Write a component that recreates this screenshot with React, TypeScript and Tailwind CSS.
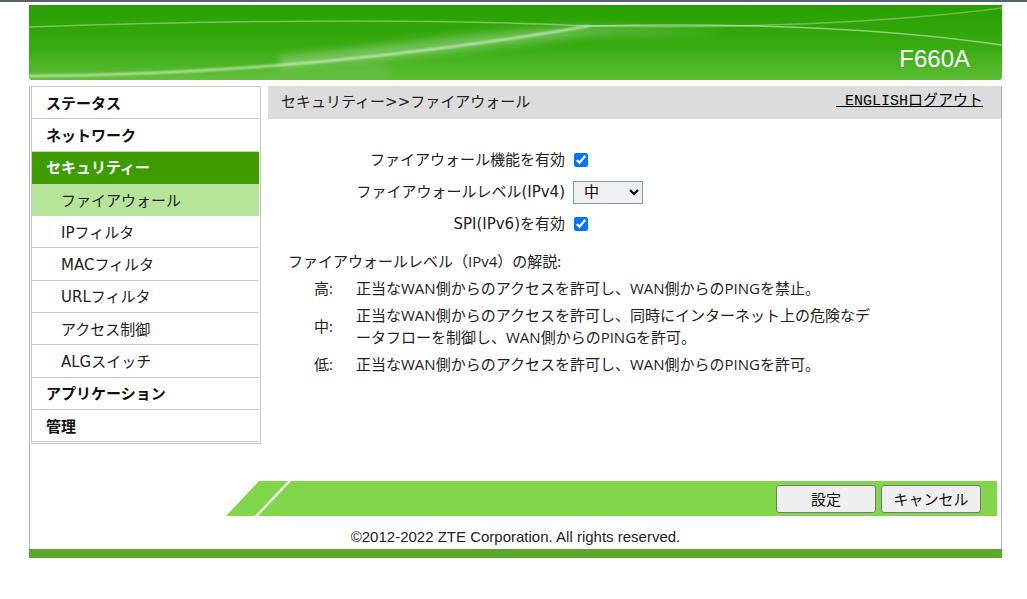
import React from "react";

const menu: { label: string; level: number; active?: boolean }[] = [
  { label: "ステータス", level: 0 },
  { label: "ネットワーク", level: 0 },
  { label: "セキュリティー", level: 0, active: true },
  { label: "ファイアウォール", level: 1, active: true },
  { label: "IPフィルタ", level: 1 },
  { label: "MACフィルタ", level: 1 },
  { label: "URLフィルタ", level: 1 },
  { label: "アクセス制御", level: 1 },
  { label: "ALGスイッチ", level: 1 },
  { label: "アプリケーション", level: 0 },
  { label: "管理", level: 0 },
];

const desc = [
  { k: "高", v: "正当なWAN側からのアクセスを許可し、WAN側からのPINGを禁止。" },
  {
    k: "中",
    v: "正当なWAN側からのアクセスを許可し、同時にインターネット上の危険なデータフローを制御し、WAN側からのPINGを許可。",
  },
  { k: "低", v: "正当なWAN側からのアクセスを許可し、WAN側からのPINGを許可。" },
];

function Header() {
  return (
    <div className="relative h-[75px] overflow-hidden rounded-b-[3px]">
      <svg
        className="absolute inset-0"
        width="973"
        height="75"
        viewBox="0 0 973 75"
      >
        <defs>
          <linearGradient id="hg" x1="0" y1="0" x2="0" y2="1">
            <stop offset="0" stopColor="#28a000" />
            <stop offset="0.55" stopColor="#37aa10" />
            <stop offset="1" stopColor="#5dbe35" />
          </linearGradient>
          <filter id="bl" x="-10%" y="-50%" width="120%" height="200%">
            <feGaussianBlur stdDeviation="5" />
          </filter>
          <filter id="bl2" x="-10%" y="-50%" width="120%" height="200%">
            <feGaussianBlur stdDeviation="0.8" />
          </filter>
        </defs>
        <rect width="973" height="75" fill="url(#hg)" />
        <path
          d="M250,52 C400,36 500,20 570,22 C620,24 660,26 700,27 C640,30 600,28 560,30 C480,40 380,54 250,62 Z"
          fill="#ffffff"
          opacity="0.3"
          filter="url(#bl)"
        />
        <path
          d="M0,70 C150,70 260,66 360,56 L360,75 L0,75 Z"
          fill="#ffffff"
          opacity="0.08"
          filter="url(#bl)"
        />
        <path
          d="M0,22 C180,16 380,12 560,21"
          stroke="#ffffff"
          strokeOpacity="0.35"
          strokeWidth="1.5"
          fill="none"
        />
        <path
          d="M0,71 C200,70 380,52 560,21"
          stroke="#ffffff"
          strokeOpacity="0.7"
          strokeWidth="2"
          fill="none"
          filter="url(#bl2)"
        />
        <path
          d="M560,21 C700,18 850,22 973,40"
          stroke="#ffffff"
          strokeOpacity="0.45"
          strokeWidth="1.5"
          fill="none"
        />
        <path
          d="M560,21 C700,24 860,18 973,3"
          stroke="#ffffff"
          strokeOpacity="0.3"
          strokeWidth="1.5"
          fill="none"
        />
      </svg>
      <div className="relative flex justify-end pr-[32px] pt-[42px] text-[24px] leading-[24px] text-white font-['Liberation_Sans',Arial,sans-serif]">
        F660A
      </div>
    </div>
  );
}

function Sidebar() {
  return (
    <div className="ml-[1px] box-border w-[230px] self-start border border-[#c8c8c8] pr-[1px] pb-[1px] font-['DejaVu_Sans','Noto_Sans_CJK_JP',sans-serif] text-[15px]">
      {menu.map((m) => {
        let cls = "";
        if (m.level === 0 && m.active) {
          cls = "pl-[14px] font-bold text-white bg-[#3e9c00] border-[#3e9c00]";
        } else if (m.level === 0) {
          cls = "pl-[14px] font-bold text-[#111111] border-[#cccccc]";
        } else if (m.active) {
          cls = "pl-[29px] text-[#222222] bg-[#b6e59a] border-[#b6e59a]";
        } else {
          cls = "pl-[29px] text-[#222222] border-[#cccccc]";
        }
        return (
          <div
            key={m.label}
            className={
              "box-border flex h-[32.3px] items-center border-b pt-[3px] leading-none " +
              cls
            }
          >
            {m.label}
          </div>
        );
      })}
    </div>
  );
}

function Content() {
  return (
    <div className="ml-[7px] flex-1 text-[#222222]">
      <div className="flex h-[33px] items-center justify-between bg-[#dcdcdc] pl-[13px] pr-[18px] font-['DejaVu_Sans','Noto_Sans_CJK_JP',sans-serif] text-[15px]">
        <span>セキュリティー&gt;&gt;ファイアウォール</span>
        <span className="flex font-['Liberation_Mono','Noto_Sans_CJK_JP',monospace] text-[15px] text-black">
          <a className="underline whitespace-pre" href="#">
            {" ENGLISH"}
          </a>
          <a className="underline" href="#">
            ログアウト
          </a>
        </span>
      </div>

      <div className="mt-[25px] font-['DejaVu_Sans','Noto_Sans_CJK_JP',sans-serif] text-[15px]">
        <div className="flex h-[32px] items-center">
          <div className="w-[297px] text-right">ファイアウォール機能を有効</div>
          <div className="flex pl-[9px]">
            <input type="checkbox" defaultChecked className="m-0 h-[14px] w-[14px]" />
          </div>
        </div>
        <div className="flex h-[32px] items-center">
          <div className="w-[297px] text-right">ファイアウォールレベル(IPv4)</div>
          <div className="flex pl-[8px]">
            <select
              defaultValue="中"
              className="h-[23px] w-[70px] border border-[#7f9db9] bg-[#f0f0f0] pl-[6px] text-[15px] text-black"
            >
              <option>高</option>
              <option>中</option>
              <option>低</option>
            </select>
          </div>
        </div>
        <div className="flex h-[32px] items-center">
          <div className="w-[297px] text-right">SPI(IPv6)を有効</div>
          <div className="flex pl-[9px]">
            <input type="checkbox" defaultChecked className="m-0 h-[14px] w-[14px]" />
          </div>
        </div>
      </div>

      <div className="mt-[10px] pl-[20px] font-['Open_Sans','Noto_Sans_CJK_JP',sans-serif] text-[15px] leading-[22px]">
        <div>ファイアウォールレベル（IPv4）の解説:</div>
        <div className="mt-[5px] flex flex-col gap-[5px] pl-[26px]">
          {desc.map((d) => (
            <div key={d.k} className="flex items-center">
              <div className="w-[42px] shrink-0">{d.k}:</div>
              <div className="w-[520px]">{d.v}</div>
            </div>
          ))}
        </div>
      </div>
    </div>
  );
}

function BottomBar() {
  return (
    <div className="ml-[196px] mr-[4px] mt-[37px] flex h-[35px]">
      <svg width="70" height="35" viewBox="0 0 70 35" className="shrink-0">
        <polygon points="0,35 33,0 62,0 29,35" fill="#82d64c" />
        <polygon points="32,35 65,0 70,0 70,35" fill="#82d64c" />
      </svg>
      <div className="flex flex-1 items-center justify-end gap-[5px] bg-[#82d64c] pr-[16px] font-['Noto_Sans_CJK_JP',sans-serif] text-[15px] text-[#111111]">
        <button className="box-border h-[28px] w-[100px] rounded-[3px] border border-[#767676] bg-[#efefef] leading-none">
          設定
        </button>
        <button className="box-border h-[28px] w-[100px] rounded-[3px] border border-[#767676] bg-[#efefef] leading-none">
          キャンセル
        </button>
      </div>
    </div>
  );
}

export default function App() {
  return (
    <div className="min-h-[599px] bg-white">
      <div className="h-[2px] bg-[#53626c]" />
      <div className="ml-[29px] mt-[3px] w-[973px]">
        <Header />
        <div className="mt-[6px] border-x border-[#b4b4b4]">
          <div className="flex">
            <Sidebar />
            <Content />
          </div>
          <BottomBar />
          <div className="h-[33px] pt-[11px] text-center font-['Liberation_Sans',Arial,sans-serif] text-[15px] leading-[20px] text-[#222222]">
            ©2012-2022 ZTE Corporation. All rights reserved.
          </div>
        </div>
        <div className="h-[9px] bg-[#5ba82b]" />
      </div>
    </div>
  );
}
